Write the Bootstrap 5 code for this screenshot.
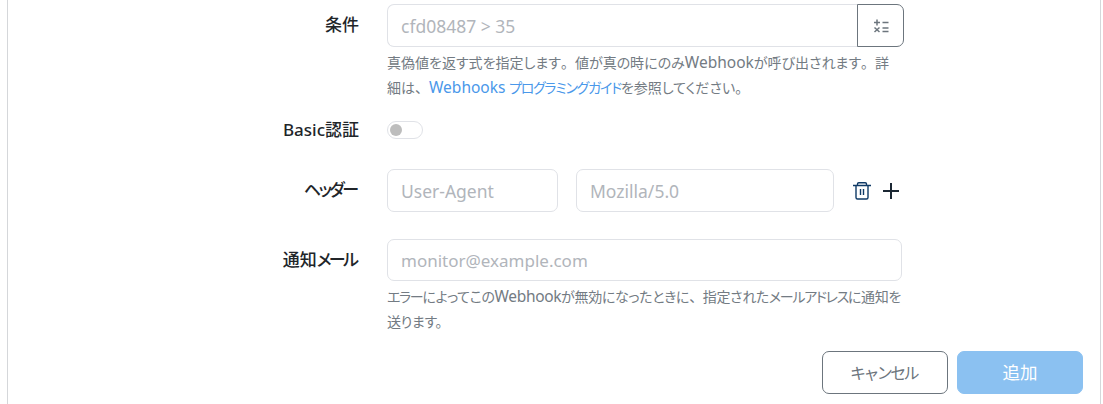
<!DOCTYPE html>
<html lang="ja">
<head>
<meta charset="utf-8">
<title>Webhook</title>
<link href="https://cdn.jsdelivr.net/npm/bootstrap@5.3.0/dist/css/bootstrap.min.css" rel="stylesheet">
<style>
html,body{height:404px;overflow:hidden;background:#fff}
body{font-family:"Noto Sans","Noto Sans CJK JP",sans-serif;color:#212529;padding:0 2px 0 7px;font-feature-settings:"palt"}
.sheet{border-left:1px solid #d5d7da;border-right:1px solid #d5d7da;height:404px;padding-top:4px}
.frow{display:flex}
.flabel{width:351px;flex:none;text-align:right;font-weight:500;font-size:17px;line-height:22px;color:#212529;padding-top:10px}
.lk{letter-spacing:-2.600px;margin-right:2.600px}
.fbody{margin-left:28px;flex:none}
.finput{height:43px;border:1px solid #e0e2e7;border-radius:7px;font-size:17.500px;color:#212529;padding:0 13px;box-shadow:none}
.finput::placeholder{color:#b1b5bb;opacity:1}
.cond-group{width:517px}
.cond-group .finput{border-top-right-radius:0;border-bottom-right-radius:0;border-right:0}
.calc{width:47px;padding:0;height:43px;border:1px solid #6c757d;border-radius:0 7px 7px 0;background:#fff;color:#6c757d}
.hint{font-size:14px;line-height:25px;color:#737b83;margin-top:3px}
.lt{font-size:15.500px}
.ka{letter-spacing:-1.300px}
.pu{font-feature-settings:normal}
.hint-a{width:507px}
.hint-a a{color:#4a98ea;text-decoration:none}
.r-basic{margin-top:17px;height:25px;align-items:center}
.r-basic .flabel{padding-top:0}
.tog{width:36px;height:18px;border:1px solid #e0e2e7;border-radius:9px;padding-left:2px;display:flex;align-items:center;background:#fff}
.tog-k{width:12px;height:12px;border-radius:50%;background:#bdbdbd}
.r-head{margin-top:27px}
.w-key{width:171px}
.w-val{width:258px;margin-left:18px}
.ic{background:none;border:0;padding:0;line-height:0}
.ic-t{color:#0f3a66;margin-left:19px}
.ic-p{margin-left:12px}
.r-mail{margin-top:27px}
.w-mail{width:515px;height:42px;font-size:17px}
.hint-b{width:515px;margin-top:3px;letter-spacing:-.350px}
.r-act{margin-top:17px;padding-right:17px;gap:9px}
.bt{width:126px;height:43px;font-size:17.500px;border-radius:7px;padding:0}
.bt-c{border:1px solid #6c757d;background:#fff;color:#6c757d;font-size:16px;letter-spacing:-2.600px;padding-right:3px}
.bt-a,.bt-a:disabled{background:#8bc1f1;border:1px solid #8bc1f1;color:#fff;opacity:1}
</style>
</head>
<body>
<div class="sheet">
  <div class="frow">
    <label class="flabel" for="c1">条件</label>
    <div class="fbody">
      <div class="input-group cond-group">
        <input id="c1" class="form-control finput" placeholder="cfd08487 > 35">
        <button class="btn calc d-flex align-items-center justify-content-center" type="button" aria-label="式">
          <svg width="16" height="14" viewBox="0 0 16 14" fill="none" stroke="currentColor" stroke-width="1.5"><path d="M1 3.500h6M4 .5v6M9.500 3.500h6M1.500 8.500l5 4.500M6.500 8.500l-5 4.500M9.500 9h6M9.500 12.500h6"/></svg>
        </button>
      </div>
      <div class="hint hint-a">真偽値を返す式を指定します<span class="pu">。</span>値が真の時にのみ<span class="lt">Webhook</span>が呼び出されます<span class="pu">。</span>詳細は<span class="pu">、</span><a href="#"><span class="lt">Webhooks</span> <span class="ka">プログラミングガイド</span></a>を参照してください。</div>
    </div>
  </div>
  <div class="frow r-basic">
    <div class="flabel">Basic認証</div>
    <div class="fbody"><div class="tog"><span class="tog-k"></span></div></div>
  </div>
  <div class="frow r-head">
    <div class="flabel"><span class="lk">ヘッダー</span></div>
    <div class="fbody d-flex align-items-center">
      <input class="form-control finput w-key" placeholder="User-Agent">
      <input class="form-control finput w-val" placeholder="Mozilla/5.0">
      <button class="ic ic-t" type="button" aria-label="削除">
        <svg width="18" height="18" viewBox="0 0 18 18" fill="none" stroke="currentColor" stroke-width="1.4"><path d="M0 3.500h18M3 3.500v12a1.500 1.500 0 0 0 1.500 1.500h9a1.500 1.500 0 0 0 1.500-1.500v-12M4.500 3.500V2A1.300 1.300 0 0 1 5.800.7h6.400A1.300 1.300 0 0 1 13.500 2v1.500M7.500 7v6M10.500 7v6"/></svg>
      </button>
      <button class="ic ic-p" type="button" aria-label="追加">
        <svg width="16" height="16" viewBox="0 0 16 16" fill="none" stroke="#1b2733" stroke-width="2"><path d="M0 8h16M8 0v16"/></svg>
      </button>
    </div>
  </div>
  <div class="frow r-mail">
    <div class="flabel">通知<span class="lk">メール</span></div>
    <div class="fbody">
      <input class="form-control finput w-mail" placeholder="monitor@example.com">
      <div class="hint hint-b"><span class="ka">エラー</span>によってこの<span class="lt">Webhook</span>が無効になったときに<span class="pu">、</span>指定された<span class="ka">メールアドレス</span>に通知を送ります。</div>
    </div>
  </div>
  <div class="frow r-act justify-content-end">
    <button class="btn bt bt-c" type="button">キャンセル</button>
    <button class="btn bt bt-a" type="button" disabled>追加</button>
  </div>
</div>
<script src="https://cdn.jsdelivr.net/npm/bootstrap@5.3.0/dist/js/bootstrap.bundle.min.js"></script>
</body>
</html>
